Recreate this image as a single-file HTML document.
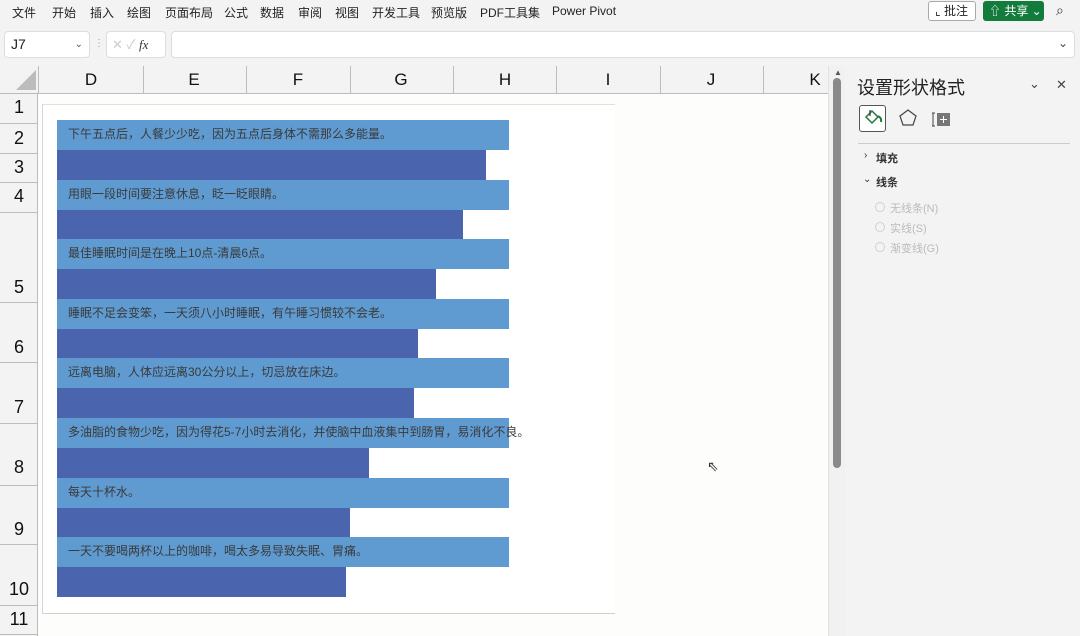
<!DOCTYPE html>
<html><head><meta charset="utf-8"><style>
*{margin:0;padding:0;box-sizing:border-box}
body{width:1080px;height:636px;overflow:hidden;background:#f3f3f3;font-family:"Liberation Sans","Noto Sans CJK SC",sans-serif;position:relative;color:#222}
.a{position:absolute}
.menu span{position:absolute;top:4px;font-size:12px;color:#222}
.bar{position:absolute;left:57px;height:30px}
.l{background:#5f9bd1;width:452px}
.d{background:#4a64ad}
.t{position:absolute;left:68px;font-size:12px;color:#3a3a3a;white-space:nowrap;line-height:30px}
.rn{position:absolute;left:0;width:38px;text-align:center;font-size:18px;color:#111}
.rl{position:absolute;left:0;width:38px;height:1px;background:#bdbdbd}
.ch{position:absolute;top:66px;font-size:17px;color:#111;width:20px;text-align:center;margin-left:-10px;line-height:28px}
.cl{position:absolute;top:66px;width:1px;height:28px;background:#bdbdbd}
.ps{position:absolute;font-size:11px;color:#bbb}
.rad{position:absolute;left:875px;width:10px;height:10px;border:1px solid #d0d0d0;border-radius:50%}
</style></head><body>
<div class="menu">
<span style="left:12px">文件</span><span style="left:52px">开始</span><span style="left:90px">插入</span><span style="left:127px">绘图</span><span style="left:165px">页面布局</span><span style="left:224px">公式</span><span style="left:260px">数据</span><span style="left:298px">审阅</span><span style="left:335px">视图</span><span style="left:372px">开发工具</span><span style="left:431px">预览版</span><span style="left:480px">PDF工具集</span><span style="left:552px">Power Pivot</span>
</div>
<div class="a" style="left:928px;top:1px;width:48px;height:20px;border:1px solid #aaa;border-radius:3px;background:#fff;font-size:12px;line-height:18px;padding-left:6px">⌞ 批注</div>
<div class="a" style="left:983px;top:1px;width:61px;height:20px;border-radius:3px;background:#137c3c;color:#fff;font-size:12px;line-height:20px;padding-left:6px">⇧ 共享 ⌄</div>
<div class="a" style="left:1056px;top:2px;font-size:14px;color:#333">⌕</div>
<!-- formula bar -->
<div class="a" style="left:4px;top:31px;width:86px;height:27px;background:#fff;border:1px solid #ddd;border-radius:4px;font-size:14px;line-height:25px;padding-left:6px">J7<span style="position:absolute;right:6px;font-size:10px;color:#555">⌄</span></div>
<div class="a" style="left:94px;top:38px;font-size:10px;color:#999">⋮</div>
<div class="a" style="left:106px;top:31px;width:60px;height:27px;background:#fff;border:1px solid #ddd;border-radius:4px;font-size:13px;line-height:25px;padding-left:5px;color:#ccc">✕ ✓ <i style="color:#333;font-family:'Liberation Serif',serif">fx</i></div>
<div class="a" style="left:171px;top:31px;width:904px;height:27px;background:#fff;border:1px solid #ddd;border-radius:4px"><span style="position:absolute;right:6px;top:4px;font-size:12px;color:#444">⌄</span></div>
<!-- headers -->
<div class="a" style="left:0;top:66px;width:828px;height:28px;background:#f3f3f3;border-bottom:1px solid #bbb"></div>
<div class="a" style="left:16px;top:70px;width:0;height:0;border-left:20px solid transparent;border-bottom:20px solid #bcbcbc"></div>
<div class="cl" style="left:38px"></div><div class="cl" style="left:143px"></div><div class="cl" style="left:246px"></div><div class="cl" style="left:350px"></div><div class="cl" style="left:453px"></div><div class="cl" style="left:556px"></div><div class="cl" style="left:660px"></div><div class="cl" style="left:763px"></div>
<div class="ch" style="left:91px">D</div><div class="ch" style="left:194px">E</div><div class="ch" style="left:298px">F</div><div class="ch" style="left:401px">G</div><div class="ch" style="left:505px">H</div><div class="ch" style="left:608px">I</div><div class="ch" style="left:711px">J</div><div class="ch" style="left:815px">K</div>
<div class="a" style="left:0;top:94px;width:38px;height:542px;background:#f3f3f3;border-right:1px solid #bbb"></div>
<div class="a" style="left:38px;top:94px;width:790px;height:542px;background:#fdfdfc"></div>
<div class="rl" style="top:123px"></div><div class="rl" style="top:153px"></div><div class="rl" style="top:182px"></div><div class="rl" style="top:212px"></div><div class="rl" style="top:302px"></div><div class="rl" style="top:362px"></div><div class="rl" style="top:423px"></div><div class="rl" style="top:485px"></div><div class="rl" style="top:544px"></div><div class="rl" style="top:605px"></div><div class="rl" style="top:634px"></div>
<div class="rn" style="top:97px">1</div><div class="rn" style="top:128px">2</div><div class="rn" style="top:157px">3</div><div class="rn" style="top:186px">4</div><div class="rn" style="top:277px">5</div><div class="rn" style="top:337px">6</div><div class="rn" style="top:397px">7</div><div class="rn" style="top:457px">8</div><div class="rn" style="top:519px">9</div><div class="rn" style="top:579px">10</div><div class="rn" style="top:609px">11</div>
<!-- chart -->
<div class="a" style="left:42px;top:104px;width:573px;height:510px;border-left:1px solid #d6d6d6;border-top:1px solid #e0e0e0;border-bottom:1px solid #d0d0d0;background:#fff"></div>
<div class="bar l" style="top:120px"></div><div class="bar d" style="top:150px;width:429px"></div>
<div class="bar l" style="top:180px"></div><div class="bar d" style="top:210px;width:406px;height:29px"></div>
<div class="bar l" style="top:239px"></div><div class="bar d" style="top:269px;width:379px"></div>
<div class="bar l" style="top:299px"></div><div class="bar d" style="top:329px;width:361px;height:29px"></div>
<div class="bar l" style="top:358px"></div><div class="bar d" style="top:388px;width:357px"></div>
<div class="bar l" style="top:418px"></div><div class="bar d" style="top:448px;width:312px"></div>
<div class="bar l" style="top:478px"></div><div class="bar d" style="top:508px;width:293px;height:29px"></div>
<div class="bar l" style="top:537px"></div><div class="bar d" style="top:567px;width:289px"></div>
<div class="t" style="top:119px">下午五点后，人餐少少吃，因为五点后身体不需那么多能量。</div>
<div class="t" style="top:179px">用眼一段时间要注意休息，眨一眨眼睛。</div>
<div class="t" style="top:238px">最佳睡眠时间是在晚上10点-清晨6点。</div>
<div class="t" style="top:298px">睡眠不足会变笨，一天须八小时睡眠，有午睡习惯较不会老。</div>
<div class="t" style="top:357px">远离电脑，人体应远离30公分以上，切忌放在床边。</div>
<div class="t" style="top:417px">多油脂的食物少吃，因为得花5-7小时去消化，并使脑中血液集中到肠胃，易消化不良。</div>
<div class="t" style="top:477px">每天十杯水。</div>
<div class="t" style="top:536px">一天不要喝两杯以上的咖啡，喝太多易导致失眠、胃痛。</div>
<div class="a" style="left:707px;top:458px;font-size:14px;color:#333">⇖</div>
<!-- scrollbar -->
<div class="a" style="left:828px;top:66px;width:17px;height:570px;background:#f1f1f1;border-left:1px solid #e0e0e0"></div>
<div class="a" style="left:834px;top:68px;font-size:8px;color:#555">▲</div>
<div class="a" style="left:833px;top:78px;width:8px;height:390px;background:#8a8a8a;border-radius:4px"></div>
<!-- panel -->
<div class="a" style="left:857px;top:74px;font-size:18px;color:#222">设置形状格式</div>
<div class="a" style="left:1029px;top:76px;font-size:13px;color:#444">⌄</div>
<div class="a" style="left:1056px;top:77px;font-size:13px;color:#444">✕</div>
<div class="a" style="left:859px;top:105px;width:27px;height:27px;border:1px solid #555;border-radius:3px;background:#fff"></div>
<svg class="a" style="left:862px;top:108px" width="22" height="22" viewBox="0 0 22 22"><path d="M4 9 L10 3 L16 9 L10 15 Z" fill="none" stroke="#1f7a3c" stroke-width="1.5"/><path d="M16 8 Q20 10 19 14" fill="none" stroke="#1f7a3c" stroke-width="2"/><path d="M8 2 L8 8" stroke="#333" stroke-width="1.2"/></svg>
<svg class="a" style="left:898px;top:108px" width="20" height="20" viewBox="0 0 20 20"><path d="M10 2 L18 8 L15 17 L5 17 L2 8 Z" fill="none" stroke="#444" stroke-width="1.2"/></svg>
<svg class="a" style="left:932px;top:109px" width="20" height="20" viewBox="0 0 20 20"><path d="M1 4 V17 M0 4 H3 M0 17 H3" stroke="#444" stroke-width="1"/><rect x="5" y="4" width="13" height="13" fill="#777"/><path d="M8 10.5 H15 M11.5 7 V14" stroke="#fff" stroke-width="1"/></svg>
<div class="a" style="left:858px;top:143px;width:212px;height:1px;background:#ccc"></div>
<div class="a" style="left:864px;top:150px;font-size:10px;color:#333">›</div>
<div class="a" style="left:876px;top:150px;font-size:11px;font-weight:bold;color:#333">填充</div>
<div class="a" style="left:863px;top:174px;font-size:10px;color:#333">⌄</div>
<div class="a" style="left:876px;top:174px;font-size:11px;font-weight:bold;color:#333">线条</div>
<div class="rad" style="top:202px"></div><div class="ps" style="left:890px;top:200px">无线条(N)</div>
<div class="rad" style="top:222px"></div><div class="ps" style="left:890px;top:220px">实线(S)</div>
<div class="rad" style="top:242px"></div><div class="ps" style="left:890px;top:240px">渐变线(G)</div>
</body></html>
